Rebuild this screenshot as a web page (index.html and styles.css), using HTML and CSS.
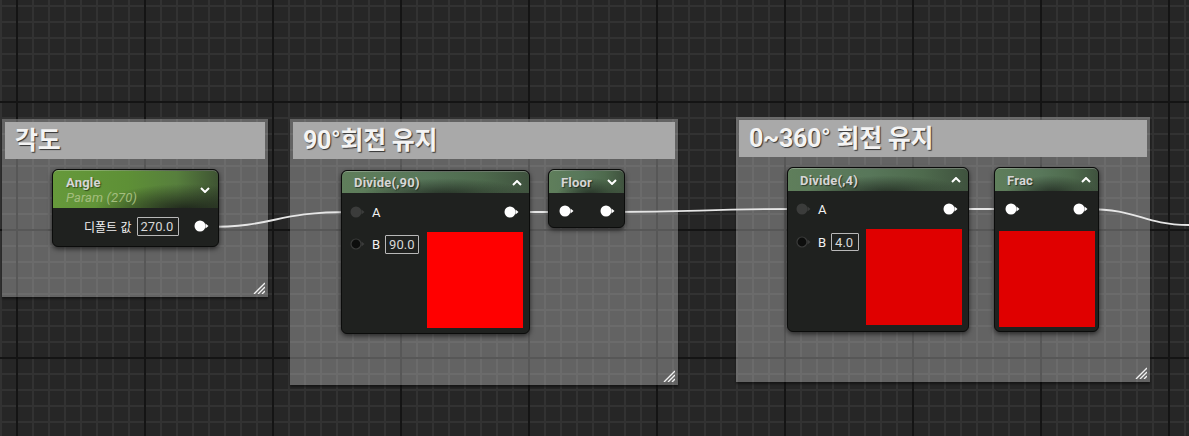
FILE: index.html
```html
<!DOCTYPE html>
<html lang="ko">
<head>
<meta charset="utf-8">
<title>Material Graph</title>
<link rel="stylesheet" href="styles.css">
</head>
<body>
<div class="canvas">

  <div class="comment c1">
    <div class="comment-head">각도</div>
    <svg class="grip" viewBox="0 0 12 12"><path d="M12 1L1 12M12 5L5 12M12 9L9 12"/></svg>
  </div>
  <div class="comment c2">
    <div class="comment-head">90°회전 유지</div>
    <svg class="grip" viewBox="0 0 12 12"><path d="M12 1L1 12M12 5L5 12M12 9L9 12"/></svg>
  </div>
  <div class="comment c3">
    <div class="comment-head">0~360° 회전 유지</div>
    <svg class="grip" viewBox="0 0 12 12"><path d="M12 1L1 12M12 5L5 12M12 9L9 12"/></svg>
  </div>

  <svg class="wires" width="1189" height="436" viewBox="0 0 1189 436">
    <path d="M205 227 C280 227 270 212 352 212"/>
    <path d="M517 212 L561 212"/>
    <path d="M611 212 C700 212 700 209 799 209"/>
    <path d="M958 209 L1007 209"/>
    <path d="M1086 209 C1140 209 1140 224 1189 225"/>
  </svg>

  <!-- Angle param node -->
  <div class="node n-angle">
    <div class="node-head head-param">
      <div class="titles">
        <div class="title">Angle</div>
        <div class="subtitle">Param (270)</div>
      </div>
      <svg class="chev" viewBox="0 0 10 6"><path d="M1 1L5 5L9 1"/></svg>
    </div>
    <div class="param-row">
      <span class="label">디폴트 값</span>
      <span class="field">270.0</span>
      <svg class="pin pin-out" viewBox="0 0 15 12"><circle cx="6" cy="6" r="5.5"/><path d="M11.5 3.5L14.5 6L11.5 8.5Z"/></svg>
    </div>
  </div>

  <!-- Divide(,90) -->
  <div class="node n-div1">
    <div class="node-head head-op">
      <div class="title">Divide(,90)</div>
      <svg class="chev" viewBox="0 0 10 6"><path d="M1 5L5 1L9 5"/></svg>
    </div>
    <div class="node-body">
      <div class="inputs">
        <div class="in-row"><svg class="pin pin-grey" viewBox="0 0 15 12"><circle cx="6" cy="6" r="5.5"/><path d="M11.5 3.5L14.5 6L11.5 8.5Z"/></svg><span class="pin-label">A</span></div>
        <div class="in-row"><svg class="pin pin-empty" viewBox="0 0 15 12"><circle cx="6" cy="6" r="5"/><path d="M11.5 3.5L14.5 6L11.5 8.5Z"/></svg><span class="pin-label">B</span><span class="field f-b1">90.0</span></div>
      </div>
      <div class="outputs">
        <svg class="pin pin-out" viewBox="0 0 15 12"><circle cx="6" cy="6" r="5.5"/><path d="M11.5 3.5L14.5 6L11.5 8.5Z"/></svg>
        <div class="preview red1"></div>
      </div>
    </div>
  </div>

  <!-- Floor -->
  <div class="node n-floor">
    <div class="node-head head-op">
      <div class="title">Floor</div>
      <svg class="chev" viewBox="0 0 10 6"><path d="M1 1L5 5L9 1"/></svg>
    </div>
    <div class="pins-row">
      <svg class="pin pin-out" viewBox="0 0 15 12"><circle cx="6" cy="6" r="5.5"/><path d="M11.5 3.5L14.5 6L11.5 8.5Z"/></svg>
      <svg class="pin pin-out" viewBox="0 0 15 12"><circle cx="6" cy="6" r="5.5"/><path d="M11.5 3.5L14.5 6L11.5 8.5Z"/></svg>
    </div>
  </div>

  <!-- Divide(,4) -->
  <div class="node n-div2">
    <div class="node-head head-op">
      <div class="title">Divide(,4)</div>
      <svg class="chev" viewBox="0 0 10 6"><path d="M1 5L5 1L9 5"/></svg>
    </div>
    <div class="node-body b2">
      <div class="inputs">
        <div class="in-row"><svg class="pin pin-grey" viewBox="0 0 15 12"><circle cx="6" cy="6" r="5.5"/><path d="M11.5 3.5L14.5 6L11.5 8.5Z"/></svg><span class="pin-label">A</span></div>
        <div class="in-row"><svg class="pin pin-empty" viewBox="0 0 15 12"><circle cx="6" cy="6" r="5"/><path d="M11.5 3.5L14.5 6L11.5 8.5Z"/></svg><span class="pin-label">B</span><span class="field f-b2">4.0</span></div>
      </div>
      <div class="outputs">
        <svg class="pin pin-out" viewBox="0 0 15 12"><circle cx="6" cy="6" r="5.5"/><path d="M11.5 3.5L14.5 6L11.5 8.5Z"/></svg>
        <div class="preview red2"></div>
      </div>
    </div>
  </div>

  <!-- Frac -->
  <div class="node n-frac">
    <div class="node-head head-op">
      <div class="title">Frac</div>
      <svg class="chev" viewBox="0 0 10 6"><path d="M1 5L5 1L9 5"/></svg>
    </div>
    <div class="pins-row frac-pins">
      <svg class="pin pin-out" viewBox="0 0 15 12"><circle cx="6" cy="6" r="5.5"/><path d="M11.5 3.5L14.5 6L11.5 8.5Z"/></svg>
      <svg class="pin pin-out" viewBox="0 0 15 12"><circle cx="6" cy="6" r="5.5"/><path d="M11.5 3.5L14.5 6L11.5 8.5Z"/></svg>
    </div>
    <div class="preview red2 frac-prev"></div>
  </div>

</div>
</body>
</html>
```

FILE: styles.css
```css
* { box-sizing: border-box; }

html, body {
  margin: 0;
  padding: 0;
  background: #262626;
}

.canvas {
  position: relative;
  width: 1189px;
  height: 436px;
  overflow: hidden;
  font-family: Roboto, "Noto Sans CJK KR", sans-serif;
  background-color: #262626;
  background-image:
    linear-gradient(to right, #141414 2px, transparent 2px),
    linear-gradient(to bottom, #141414 2px, transparent 2px),
    linear-gradient(to right, #323232 2px, transparent 2px),
    linear-gradient(to bottom, #323232 2px, transparent 2px);
  background-size: 128px 100%, 100% 128px, 16px 100%, 100% 16px;
  background-position: 16px 0, 0 101px, 0px 0, 0 5px;
}

/* ---------- comments ---------- */
.comment {
  position: absolute;
  z-index: 1;
  background: rgba(225, 225, 225, 0.33);
  box-shadow: 0 2px 2px rgba(0, 0, 0, 0.45);
  padding: 3px;
}
.c1 { left: 2px; top: 119px; width: 266px; height: 178px; }
.c2 { left: 290px; top: 119px; width: 388px; height: 266px; }
.c3 { left: 736px; top: 117px; width: 414px; height: 265px; }

.comment-head {
  height: 37px;
  background: #a9a9a9;
  color: #f4f4f4;
  font-family: Roboto, "Noto Sans CJK KR", sans-serif;
  font-weight: 700;
  font-size: 25px;
  line-height: 37px;
  padding-left: 10px;
  text-shadow: 1px 1px 1px rgba(0, 0, 0, 0.7);
  letter-spacing: -0.3px;
}

.grip {
  position: absolute;
  right: 3px;
  bottom: 3px;
  width: 12px;
  height: 12px;
}
.grip path { stroke: #f2f2f2; stroke-width: 1.4; fill: none; }

/* ---------- wires ---------- */
.wires {
  position: absolute;
  left: 0;
  top: 0;
  z-index: 2;
  pointer-events: none;
}
.wires path { stroke: #e6e6e6; stroke-width: 1.8; fill: none; }

/* ---------- nodes ---------- */
.node {
  position: absolute;
  z-index: 3;
  background: #1f211f;
  border: 1px solid #0b0c0b;
  border-radius: 6px;
  box-shadow: 0 2px 5px rgba(0, 0, 0, 0.6);
  overflow: hidden;
  color: #f0f0f0;
}
.n-angle { left: 52px; top: 169px; width: 167px; height: 78px; }
.n-div1  { left: 341px; top: 170px; width: 189px; height: 164px; }
.n-floor { left: 548px; top: 169px; width: 77px; height: 59px; }
.n-div2  { left: 787px; top: 167px; width: 182px; height: 165px; }
.n-frac  { left: 994px; top: 167px; width: 105px; height: 165px; }

.node-head {
  display: flex;
  align-items: center;
  justify-content: space-between;
  border-top: 1px solid rgba(255, 255, 255, 0.25);
  border-radius: 5px 5px 0 0;
}
.head-param {
  height: 38px;
  padding: 0 8px 0 13px;
  background:
    radial-gradient(ellipse 55% 70% at 80% 105%, rgba(28, 34, 26, 0.95) 0%, rgba(28, 34, 26, 0) 100%),
    linear-gradient(to right, #66993b 0%, #5e9036 45%, #577f3d 75%, #3f5433 100%);
}
.head-op {
  height: 22px;
  padding: 0 7px 0 12px;
  background:
    radial-gradient(ellipse 45% 80% at 55% 110%, rgba(30, 38, 30, 0.85) 0%, rgba(30, 38, 30, 0) 100%),
    linear-gradient(to right, #5f7e5b 0%, #58775a 45%, #4e6a4d 75%, #3f523e 100%);
}
.n-div2 .head-op, .n-frac .head-op, .n-floor .head-op { height: 23px; }

.titles { display: flex; flex-direction: column; gap: 0; padding-top: 1px; }
.title {
  font-size: 13px;
  font-weight: 700;
  color: #d6d6d6;
  letter-spacing: 0.2px;
  text-shadow: 1px 1px 1px rgba(0, 0, 0, 0.5);
}
.subtitle {
  font-size: 13px;
  font-style: italic;
  color: #a4bd7e;
  letter-spacing: 0.1px;
}
.chev { width: 10px; height: 6px; }
.chev path { stroke: #ffffff; stroke-width: 2; fill: none; }

/* param row */
.param-row {
  display: flex;
  align-items: center;
  height: 38px;
  padding-left: 31px;
  padding-bottom: 2px;
}
.label {
  font-family: "Noto Sans CJK KR", Roboto, sans-serif;
  font-size: 12px;
  color: #f0f0f0;
  margin-right: 5px;
}
.field {
  display: inline-block;
  border: 1px solid #b8b8b8;
  border-radius: 1px;
  font-size: 13px;
  color: #d8d8d8;
  height: 19px;
  line-height: 17px;
  padding: 0 3px;
}
.param-row .field { width: 42px; }
.param-row .pin { margin-left: 15px; }

/* pins */
.pin { width: 15px; height: 12px; flex: none; }
.pin-out circle, .pin-out path { fill: #ffffff; }
.pin-grey circle { fill: #3b3c3b; }
.pin-grey path { fill: #3b3c3b; }
.pin-empty circle { fill: #0d0e0d; stroke: #3a3b3a; stroke-width: 1.2; }
.pin-empty path { fill: #3a3b3a; }

/* divide body */
.node-body {
  display: flex;
  justify-content: space-between;
  padding: 0 6px 0 8px;
}
.inputs {
  display: flex;
  flex-direction: column;
  gap: 12px;
  padding-top: 9px;
}
.in-row {
  display: flex;
  align-items: center;
  height: 20px;
}
.pin-label {
  font-size: 13px;
  color: #f2f2f2;
  margin-left: 7px;
  margin-right: 5px;
}
.f-b1 { width: 34px; }
.f-b2 { width: 28px; height: 18px; }

.outputs {
  display: flex;
  flex-direction: column;
  align-items: flex-end;
  padding-top: 13px;
}
.outputs .pin { margin-right: 4px; }
.preview { width: 96px; height: 96px; }
.outputs .preview { margin-top: 14px; }
.red1 { background: #ff0000; }
.red2 { background: #e00000; }

.b2 .inputs { padding-top: 8px; gap: 13px; }
.b2 .outputs { padding-top: 12px; }
.b2 .outputs .preview { margin-top: 14px; }

/* floor / frac */
.pins-row {
  display: flex;
  justify-content: space-between;
  padding: 12px 9px 0 10px;
}
.frac-pins { padding: 12px 10px 0 10px; }
.frac-prev { margin: 16px 0 0 4px; }
```
